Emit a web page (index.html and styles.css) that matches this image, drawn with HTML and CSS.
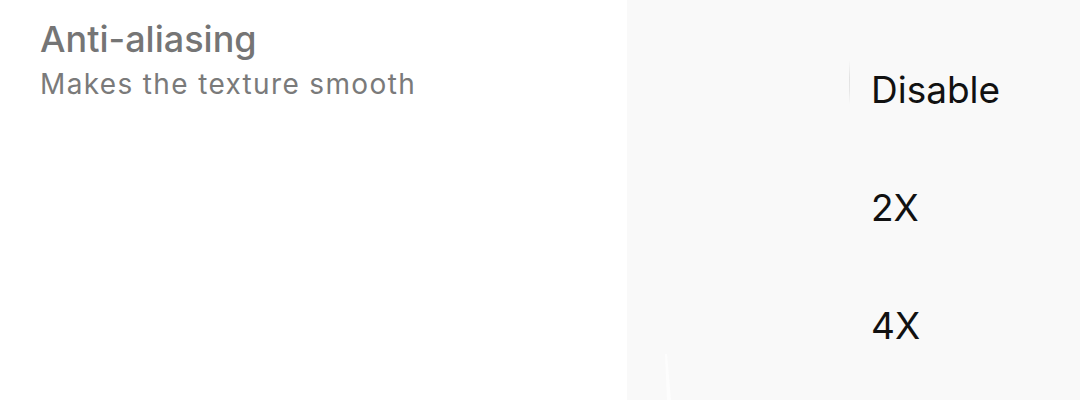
FILE: index.html
```html
<!DOCTYPE html>
<html lang="en">
<head>
<meta charset="utf-8">
<title>Anti-aliasing</title>
<link rel="stylesheet" href="styles.css">
</head>
<body>
<div class="screen">
  <section class="setting">
    <h1 class="setting-title">Anti-aliasing</h1>
    <p class="setting-summary">Makes the texture smooth</p>
  </section>
  <aside class="menu">
    <ul class="menu-list">
      <li class="menu-item menu-item-first">Disable</li>
      <li class="menu-item">2X</li>
      <li class="menu-item">4X</li>
    </ul>
    <svg class="menu-glint" width="12" height="46" viewBox="0 0 12 46"><polygon points="0,0 2,0 6,46 2,46" fill="#fdfdfd"/></svg>
  </aside>
</div>
</body>
</html>
```
FILE: styles.css
```css
* { box-sizing: border-box; }
html, body { margin: 0; padding: 0; }
body {
  width: 1080px;
  height: 400px;
  overflow: hidden;
  background: #ffffff;
  font-family: Inter, Roboto, "Liberation Sans", sans-serif;
}
.screen {
  display: flex;
  width: 1080px;
  height: 400px;
}
.setting {
  width: 627px;
  padding: 16px 0 0 40px;
  background: #ffffff;
}
.setting-title {
  margin: 0;
  font-size: 36px;
  line-height: 46px;
  font-weight: 500;
  color: #757575;
}
.setting-summary {
  margin: 0;
  font-size: 28px;
  line-height: 44px;
  font-weight: 400;
  letter-spacing: 1.35px;
  color: #7a7a7a;
}
.menu {
  position: relative;
  flex: 1;
  background: #f9f9f9;
}
.menu-list {
  list-style: none;
  margin: 0;
  padding: 62px 0 0 244px;
}
.menu-item {
  position: relative;
  height: 118px;
  font-size: 37px;
  line-height: 56px;
  color: #111111;
}
.menu-item-first::before {
  content: "";
  position: absolute;
  left: -22px;
  top: -2px;
  width: 1px;
  height: 44px;
  background: linear-gradient(#f9f9f9, #e2e2e2 40%, #e6e6e6 70%, #f9f9f9);
}
.menu-glint {
  position: absolute;
  left: 38px;
  bottom: 0;
}
```
